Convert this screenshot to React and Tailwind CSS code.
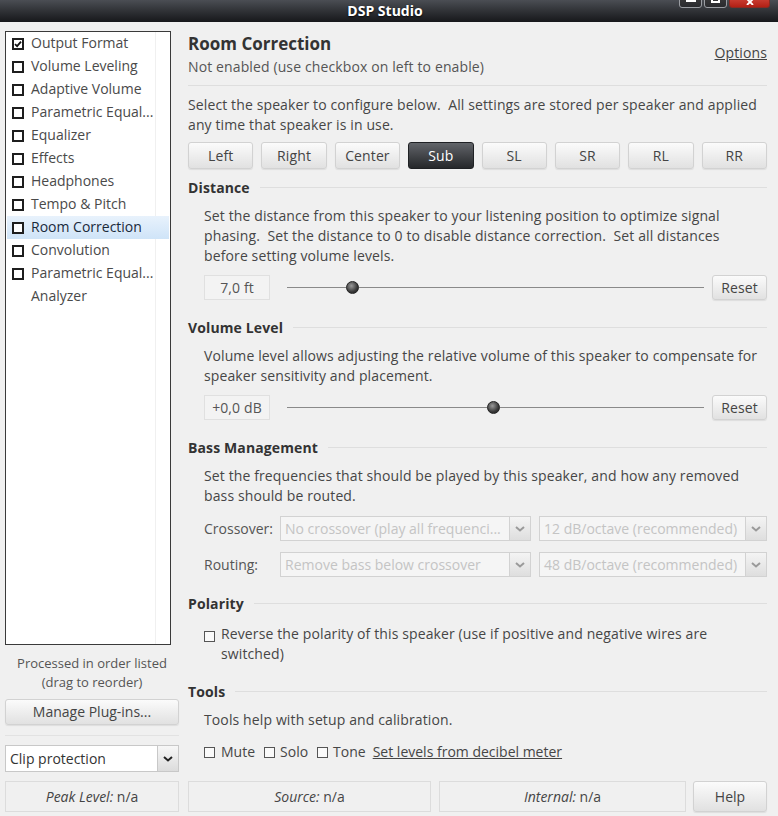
import React from 'react';

const plugins = [
  { label: 'Output Format', checked: true },
  { label: 'Volume Leveling' },
  { label: 'Adaptive Volume' },
  { label: 'Parametric Equal...' },
  { label: 'Equalizer' },
  { label: 'Effects' },
  { label: 'Headphones' },
  { label: 'Tempo & Pitch' },
  { label: 'Room Correction', selected: true },
  { label: 'Convolution' },
  { label: 'Parametric Equal...' },
  { label: 'Analyzer', noBox: true },
];

const speakers = ['Left', 'Right', 'Center', 'Sub', 'SL', 'SR', 'RL', 'RR'];

const ListCheck = ({ checked }) => (
  <span className="w-[12px] h-[12px] border-2 border-[#1e1e1e] bg-white flex items-center justify-center shrink-0">
    {checked && (
      <svg viewBox="0 0 8 8" className="w-[8px] h-[8px]">
        <path d="M1 4.2 L3.1 6.2 L7 1.6" stroke="#111" strokeWidth="1.8" fill="none" />
      </svg>
    )}
  </span>
);

const SmallCheck = () => (
  <span className="w-[11px] h-[11px] border border-[#555] bg-[#fafafa] inline-block shrink-0" />
);

const SectionHeader = ({ title }) => (
  <div className="flex items-center gap-[10px] h-[20px]">
    <span className="font-bold text-[14px] text-[#333]">{title}</span>
    <span className="flex-1 h-px bg-[#dedede] mt-[-2px]" />
  </div>
);

const Chevron = ({ color = '#555' }) => (
  <svg viewBox="0 0 10 6" className="w-[10px] h-[6px]">
    <path d="M1 1 L5 4.5 L9 1" stroke={color} strokeWidth="2" fill="none" />
  </svg>
);

const Btn = ({ children, className = '', dark }) => (
  <button
    className={
      dark
        ? `rounded-[3px] border border-[#1f2124] bg-gradient-to-b from-[#62656a] to-[#26282b] text-white text-[14px] ${className}`
        : `rounded-[3px] border border-[#d2d2d2] bg-gradient-to-b from-[#fbfbfb] to-[#e1e1e1] text-[#444] text-[14px] shadow-[0_1px_1px_rgba(0,0,0,0.08)] ${className}`
    }
  >
    {children}
  </button>
);

const SliderRow = ({ value, pos }) => (
  <div className="flex items-center h-[25px] pl-[16px]">
    <div className="w-[66px] h-[25px] border border-[#e0e0e0] bg-[#f3f3f3] flex items-center justify-center text-[14px] text-[#555]">
      {value}
    </div>
    <div className="relative flex-1 ml-[17px] mr-[8px] h-[25px] flex items-center">
      <div className="w-full h-px bg-[#8a8a8a]" />
      <span
        className="absolute w-[13px] h-[13px] rounded-full border border-[#222] bg-[radial-gradient(circle_at_40%_35%,#9a9a9a,#3a3a3a_60%,#1a1a1a)]"
        style={{ left: `calc(${pos * 100}% - 6px)` }}
      />
    </div>
    <Btn className="w-[55px] h-[25px]">Reset</Btn>
  </div>
);

const DisabledSelect = ({ text, width }) => (
  <div className={`flex h-[25px] border border-[#d2d2d2] bg-[#f5f5f5] ${width}`}>
    <span className="flex-1 px-[4px] text-[14px] text-[#c4c4c4] truncate leading-[23px]">{text}</span>
    <span className="w-[21px] border-l border-[#d2d2d2] bg-gradient-to-b from-[#f4f4f4] to-[#dedede] flex items-center justify-center">
      <Chevron color="#9a9a9a" />
    </span>
  </div>
);

export default function App() {
  return (
    <div className="w-[778px] h-[816px] bg-[#f0f0f0] flex flex-col overflow-hidden font-['Open_Sans','Noto_Sans',sans-serif] text-[#464646] text-[14px] leading-[20px]">
      {/* Title bar */}
      <div className="relative h-[22px] bg-gradient-to-b from-[#4b4e54] to-[#17181b] flex items-center justify-center shrink-0">
        <span className="text-white font-bold text-[14px] ml-[-8px] [text-shadow:0_1px_2px_rgba(0,0,0,0.8)]">DSP Studio</span>
        <div className="absolute right-[8px] top-[-10px] flex gap-[2px]">
          <span className="w-[23px] h-[18px] rounded-b-[3px] border border-[#9a9da2] bg-gradient-to-b from-[#444] to-[#2a2b2e] flex items-end justify-center pb-[5px]">
            <span className="w-[10px] h-[2px] bg-white" />
          </span>
          <span className="w-[23px] h-[18px] rounded-b-[3px] border border-[#9a9da2] bg-gradient-to-b from-[#444] to-[#2a2b2e] flex items-end justify-center pb-[4px]">
            <span className="w-[9px] h-[7px] border-2 border-white border-t-[3px]" />
          </span>
          <span className="w-[41px] h-[18px] rounded-b-[3px] border border-[#8a2a22] bg-gradient-to-b from-[#e2574c] to-[#b21f14] flex items-end justify-center pb-[2px]">
            <svg viewBox="0 0 8 6" className="w-[8px] h-[6px]">
              <path d="M1 0 L7 6 M7 0 L1 6" stroke="#fff" strokeWidth="1.8" />
            </svg>
          </span>
        </div>
      </div>

      <div className="flex flex-1">
        {/* Left column */}
        <div className="w-[188px] pl-[5px] pr-[9px] flex flex-col">
          <div className="relative mt-[9px] w-[166px] h-[614px] bg-white border border-[#3a3a3a]">
            <span className="absolute left-[149px] top-0 bottom-0 w-px bg-[#f0f0f0]" />
            {plugins.map((p, i) => (
              <div
                key={i}
                className={`relative flex items-center gap-[7px] h-[23px] pl-[5px] mx-[1px] ${p.selected ? 'bg-gradient-to-b from-[#e8f2fc] to-[#cfe4f8]' : ''}`}
              >
                {p.noBox ? <span className="w-[12px]" /> : <ListCheck checked={p.checked} />}
                <span className={`relative top-[-1px] whitespace-nowrap ${p.selected ? 'text-[#1a2a3a]' : 'text-[#4a4a4a]'}`}>{p.label}</span>
              </div>
            ))}
          </div>
          <div className="mt-[9px] text-center text-[13px] text-[#555] leading-[19px]">
            <div>Processed in order listed</div>
            <div>(drag to reorder)</div>
          </div>
          <Btn className="mt-[7px] w-[174px] h-[26px]">Manage Plug-ins...</Btn>
          <div className="mt-[10px] w-[174px] h-px bg-[#e2e2e2]" />
          <div className="mt-[9px] w-[174px] h-[27px] flex border border-[#c8c8c8] bg-white">
            <span className="flex-1 pl-[4px] leading-[25px] text-[#333]">Clip protection</span>
            <span className="w-[21px] border-l border-[#c8c8c8] bg-gradient-to-b from-[#f7f7f7] to-[#dcdcdc] flex items-center justify-center">
              <Chevron color="#222" />
            </span>
          </div>
        </div>

        {/* Right column */}
        <div className="w-[579px] flex flex-col tracking-[0.12px]">
          <div className="mt-[11px] flex justify-between items-start">
            <div>
              <div className="font-bold text-[17px] leading-[22px] text-[#333] tracking-normal">Room Correction</div>
              <div className="mt-[2px] text-[#555]">Not enabled (use checkbox on left to enable)</div>
            </div>
            <span className="underline text-[#444] mt-[10px]">Options</span>
          </div>
          <div className="mt-[8px] h-px bg-[#dedede]" />
          <p className="mt-[9px] pr-[6px]">
            Select the speaker to configure below.&nbsp; All settings are stored per speaker and applied any time that speaker is in use.
          </p>
          <div className="mt-[7px] grid grid-cols-8 gap-[8px]">
            {speakers.map((s) => (
              <Btn key={s} dark={s === 'Sub'} className="h-[27px]">
                {s}
              </Btn>
            ))}
          </div>

          <div className="mt-[9px]">
            <SectionHeader title="Distance" />
          </div>
          <p className="mt-[8px] pl-[16px] pr-[6px]">
            Set the distance from this speaker to your listening position to optimize signal phasing.&nbsp; Set the distance to 0 to disable distance correction.&nbsp; Set all distances before setting volume levels.
          </p>
          <div className="mt-[9px]">
            <SliderRow value="7,0 ft" pos={0.156} />
          </div>

          <div className="mt-[18px]">
            <SectionHeader title="Volume Level" />
          </div>
          <p className="mt-[8px] pl-[16px] pr-[6px]">
            Volume level allows adjusting the relative volume of this speaker to compensate for speaker sensitivity and placement.
          </p>
          <div className="mt-[9px]">
            <SliderRow value="+0,0 dB" pos={0.494} />
          </div>

          <div className="mt-[18px]">
            <SectionHeader title="Bass Management" />
          </div>
          <p className="mt-[8px] pl-[16px] pr-[6px]">
            Set the frequencies that should be played by this speaker, and how any removed bass should be routed.
          </p>
          <div className="mt-[10px] flex items-center pl-[16px] tracking-normal">
            <span className="w-[76px] text-[#555]">Crossover:</span>
            <DisabledSelect text="No crossover (play all frequenci..." width="w-[251px]" />
            <span className="w-[8px]" />
            <DisabledSelect text="12 dB/octave (recommended)" width="w-[228px]" />
          </div>
          <div className="mt-[11px] flex items-center pl-[16px] tracking-normal">
            <span className="w-[76px] text-[#555]">Routing:</span>
            <DisabledSelect text="Remove bass below crossover" width="w-[251px]" />
            <span className="w-[8px]" />
            <DisabledSelect text="48 dB/octave (recommended)" width="w-[228px]" />
          </div>

          <div className="mt-[17px]">
            <SectionHeader title="Polarity" />
          </div>
          <div className="mt-[10px] pl-[16px] pr-[6px] flex gap-[6px]">
            <span className="mt-[3px]">
              <SmallCheck />
            </span>
            <span>Reverse the polarity of this speaker (use if positive and negative wires are switched)</span>
          </div>

          <div className="mt-[18px]">
            <SectionHeader title="Tools" />
          </div>
          <p className="mt-[8px] pl-[16px]">Tools help with setup and calibration.</p>
          <div className="mt-[12px] pl-[16px] flex items-center tracking-normal">
            <SmallCheck />
            <span className="ml-[6px]">Mute</span>
            <span className="ml-[9px] flex"><SmallCheck /></span>
            <span className="ml-[5px]">Solo</span>
            <span className="ml-[9px] flex"><SmallCheck /></span>
            <span className="ml-[5px]">Tone</span>
            <span className="ml-[7px] underline">Set levels from decibel meter</span>
          </div>
        </div>
      </div>

      {/* Status bar */}
      <div className="flex h-[31px] mb-[4px] pl-[5px] shrink-0">
        <div className="w-[174px] border border-[#dcdcdc] flex items-center justify-center text-[#444]">
          <i>Peak Level:</i>&nbsp;n/a
        </div>
        <div className="ml-[9px] w-[243px] border border-[#dcdcdc] flex items-center justify-center">
          <i>Source:</i>&nbsp;n/a
        </div>
        <div className="ml-[8px] w-[247px] border border-[#dcdcdc] flex items-center justify-center">
          <i>Internal:</i>&nbsp;n/a
        </div>
        <Btn className="ml-[7px] w-[74px] h-[31px]">Help</Btn>
      </div>
    </div>
  );
}
